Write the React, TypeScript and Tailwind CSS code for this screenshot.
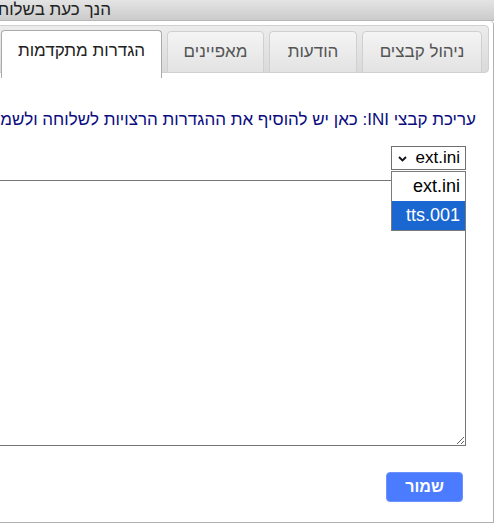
import React from "react";

export default function App() {
  const font = { fontFamily: '"Liberation Sans", Arial, sans-serif' };
  return (
    <div dir="rtl" style={font} className="w-[494px] h-[524px] overflow-hidden bg-white relative">
      <div className="w-[1000px] flex flex-col h-[523px]">
        {/* title bar */}
        <div className="h-[21px] shrink-0 bg-gradient-to-b from-[#e4e4e4] to-[#cbcbcb] border-b border-[#b8b8b8] pr-[383px] whitespace-nowrap overflow-hidden text-[17px] leading-[19px] text-[#222]">
          הנך כעת בשלוחה: 1/5
        </div>
        {/* body */}
        <div className="flex-1 bg-white border-r border-b border-[#b0b0b0] rounded-tr-[4px] pt-[4px] pr-[4px] flex flex-col">
          {/* tabs nav */}
          <div className="h-[48px] shrink-0 border border-[#d0d0d0] rounded-[4px] bg-gradient-to-b from-[#ececec] to-[#dadada] flex items-end pr-[6px] gap-[5px]">
            {[
              { t: "ניהול קבצים", w: "w-[120px]" },
              { t: "הודעות", w: "w-[88px]" },
              { t: "מאפיינים", w: "w-[97px]" },
            ].map((tab) => (
              <div
                key={tab.t}
                className={`${tab.w} h-[42px] -mb-px shrink-0 border border-[#d0d0d0] rounded-t-[4px] bg-gradient-to-b from-[#f4f4f4] to-[#e3e3e3] flex items-center justify-center text-[17px] text-[#555]`}
              >
                {tab.t}
              </div>
            ))}
            <div className="w-[161px] h-[48px] -mb-[6px] shrink-0 border border-b-0 border-[#aaaaaa] rounded-t-[4px] bg-white flex items-start pt-[10px] leading-[20px] justify-center text-[17px] text-[#222] relative z-10">
              הגדרות מתקדמות
            </div>
          </div>
          {/* panel */}
          <div className="pr-[13px] pt-[37px] flex flex-col">
            <div className="text-[17px] leading-[20px] text-[#0b0b80] whitespace-nowrap">
              עריכת קבצי INI: כאן יש להוסיף את ההגדרות הרצויות לשלוחה ולשמור אותן בקובץ המתאים
            </div>
            <div className="mr-[10px] mt-[16px] flex flex-col items-start">
              <div className="relative z-20">
                <div className="w-[75px] h-[24px] border border-[#6f6f6f] bg-white flex items-center justify-between pr-[5px] pl-[6px] text-[17px] leading-[20px] text-black">
                  <span dir="ltr">ext.ini</span>
                  <svg width="9" height="6" viewBox="0 0 9 6" className="mt-[2px]">
                    <path d="M1 1 L4.5 4.5 L8 1" fill="none" stroke="#111" strokeWidth="1.8" />
                  </svg>
                </div>
                <div className="absolute top-[25px] right-0 w-[75px] border border-[#7a7a7a] bg-white text-[18px]">
                  <div className="h-[29px] flex items-center pr-[5px] text-black">
                    <span dir="ltr">ext.ini</span>
                  </div>
                  <div className="h-[29px] flex items-center pr-[5px] bg-[#1a67d2] text-white">
                    <span dir="ltr">tts.001</span>
                  </div>
                </div>
              </div>
              <textarea
                dir="ltr"
                className="mt-[10px] w-[960px] h-[266px] border border-[#767676] bg-white block"
              />
              <button className="mt-[26px] mr-[3px] w-[77px] h-[30px] rounded-[4px] bg-[#4b7cff] border border-[#6b93ff] text-white text-[16px] font-bold leading-[20px]">
                שמור
              </button>
            </div>
          </div>
        </div>
      </div>
    </div>
  );
}
